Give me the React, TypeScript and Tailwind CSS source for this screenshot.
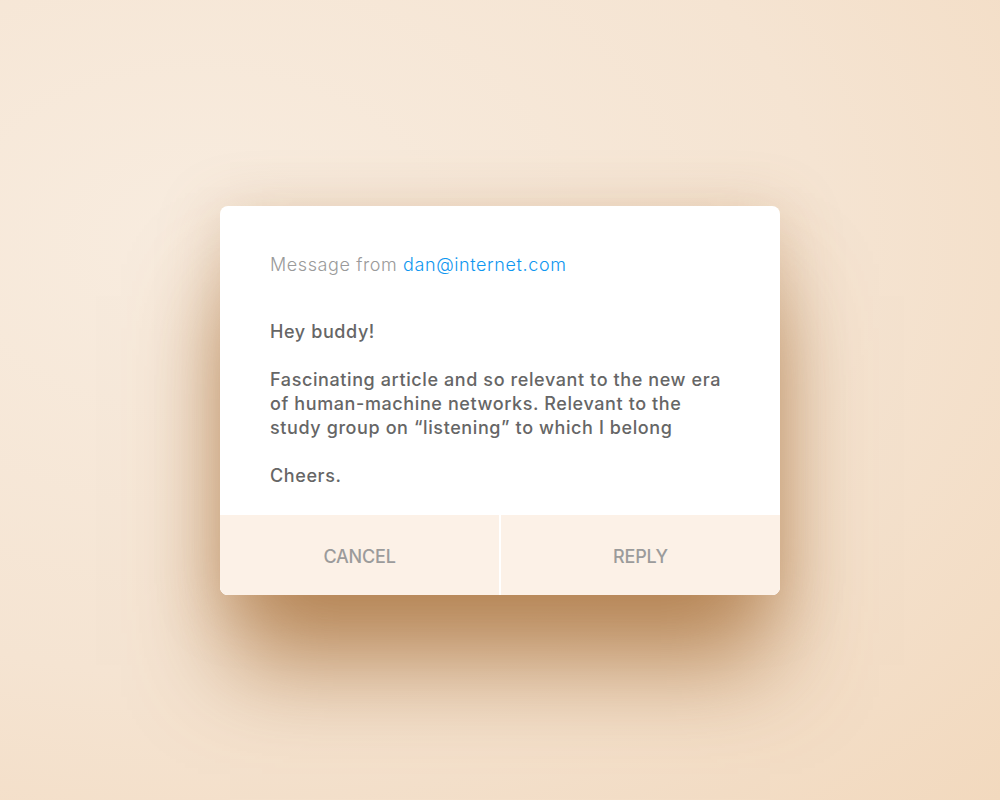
export default function App() {
  return (
    <div
      className="flex min-h-screen w-full items-center justify-center bg-[radial-gradient(ellipse_at_20%_30%,#f8ecdf_0%,#f5e4d2_55%,#f2d9be_100%)]"
      style={{ fontFamily: "Inter, 'Noto Sans', sans-serif" }}
    >
      <div className="flex w-[560px] flex-col overflow-hidden rounded-lg bg-white shadow-[0_80px_90px_-10px_rgba(165,110,55,0.75),0_10px_60px_0_rgba(180,130,80,0.35)]">
        {/* Header + body */}
        <div className="px-[50px] pt-[47px] pb-[27px]">
          <p className="text-[18px] leading-6 font-light tracking-[0.6px] text-[#9a9a9a]">
            Message from <span className="text-[#0f97f0]">dan@internet.com</span>
          </p>
          <div className="mt-[43px] text-[18px] leading-6 font-medium tracking-[0.6px] text-[#666666]">
            <p>Hey buddy!</p>
            <p className="mt-6">
              Fascinating article and so relevant to the new era of human-machine networks. Relevant to the study group
              on “listening” to which I belong
            </p>
            <p className="mt-6">Cheers.</p>
          </div>
        </div>

        {/* Actions */}
        <div className="flex h-20 gap-[2px] bg-white">
          <button className="flex-1 bg-[#fcf1e7] pt-1 text-[18px] font-medium tracking-[-0.2px] text-[#9b9b9b]">
            CANCEL
          </button>
          <button className="flex-1 bg-[#fcf1e7] pt-1 text-[18px] font-medium tracking-[-0.2px] text-[#9b9b9b]">
            REPLY
          </button>
        </div>
      </div>
    </div>
  );
}
